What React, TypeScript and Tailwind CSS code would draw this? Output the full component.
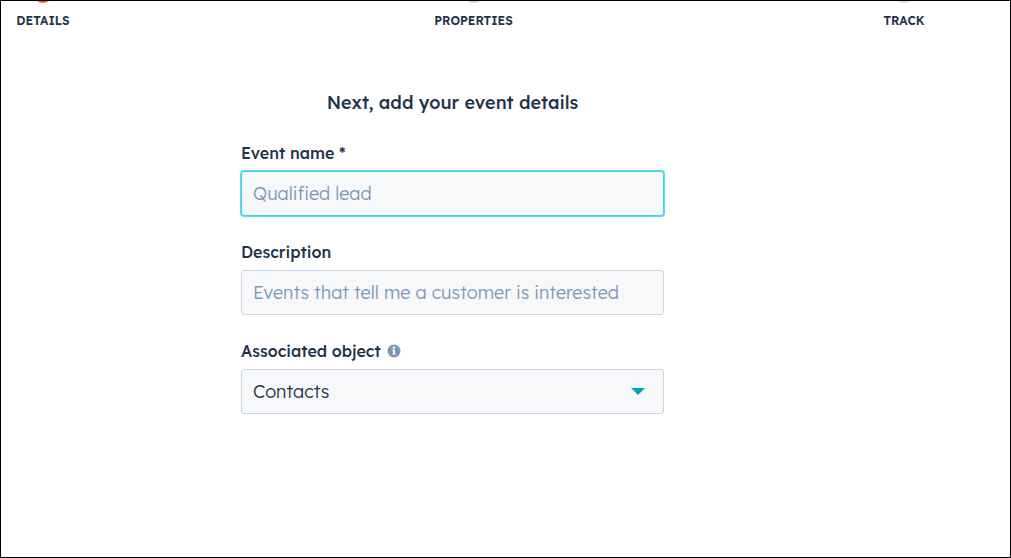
interface StepProps {
  label: string;
  isActive?: boolean;
}

function Step({ label, isActive = false }: StepProps) {
  return (
    <li className="flex w-20 flex-col items-center">
      <span
        className={`-mt-[18px] h-5 w-5 rounded-full ${
          isActive ? 'bg-[#ff5c35]' : 'bg-[#cbd6e2]'
        }`}
      />
      <span className="mt-2.5 text-xs leading-4 font-semibold">{label}</span>
    </li>
  );
}

interface TextFieldProps {
  id: string;
  label: string;
  placeholder: string;
  isHighlighted?: boolean;
}

function TextField({
  id,
  label,
  placeholder,
  isHighlighted = false,
}: TextFieldProps) {
  return (
    <div className="flex flex-col gap-2">
      <label htmlFor={id} className="text-base leading-5 font-medium">
        {label}
      </label>
      <input
        id={id}
        type="text"
        placeholder={placeholder}
        className={`h-[45px] w-full rounded-[3px] border bg-[#f6f8fa] px-[11px] text-lg font-light outline-none placeholder:text-[#7c98b6] ${
          isHighlighted
            ? 'border-[#3cd3e4] ring-1 ring-[#5fdbe8]'
            : 'border-[#cbd6e2]'
        }`}
      />
    </div>
  );
}

function InfoIcon() {
  return (
    <svg viewBox="0 0 14 14" className="h-3.5 w-3.5" aria-hidden="true">
      <circle cx="7" cy="7" r="6.5" fill="#7c98b6" />
      <circle cx="7" cy="3.7" r="1.2" fill="#fff" />
      <path d="M5.4 5.8h2.5v3.6h.8v1.2H5.3V9.4h.8V7h-.7z" fill="#fff" />
    </svg>
  );
}

export default function App() {
  return (
    <div className="min-h-screen overflow-hidden border border-black bg-white font-['Lexend_Deca',Lexend,Inter,sans-serif] text-[#1d3449]">
      <ol className="flex justify-between pr-[66px] pl-0.5">
        <Step label="DETAILS" isActive />
        <Step label="PROPERTIES" />
        <Step label="TRACK" />
      </ol>

      <main className="pt-[62px] pr-[106px]">
        <form className="mx-auto flex max-w-[423px] flex-col">
          <h1 className="text-center text-lg leading-6 font-medium">
            Next, add your event details
          </h1>

          <div className="mt-7 flex flex-col gap-[26px]">
            <TextField
              id="event-name"
              label="Event name *"
              placeholder="Qualified lead"
              isHighlighted
            />
            <TextField
              id="description"
              label="Description"
              placeholder="Events that tell me a customer is interested"
            />

            <div className="flex flex-col gap-2">
              <div className="flex items-center gap-1.5">
                <label
                  htmlFor="associated-object"
                  className="text-base leading-5 font-medium"
                >
                  Associated object
                </label>
                <InfoIcon />
              </div>
              <div className="relative">
                <select
                  id="associated-object"
                  className="h-[45px] w-full appearance-none rounded-[3px] border border-[#cbd6e2] bg-[#f6f8fa] px-[11px] text-lg font-light outline-none"
                >
                  <option>Contacts</option>
                </select>
                <svg
                  viewBox="0 0 14 7"
                  className="pointer-events-none absolute top-[19px] right-[19px] h-[7px] w-3.5"
                  aria-hidden="true"
                >
                  <path d="M0 0h14L7 7z" fill="#00a4bd" />
                </svg>
              </div>
            </div>
          </div>
        </form>
      </main>
    </div>
  );
}
